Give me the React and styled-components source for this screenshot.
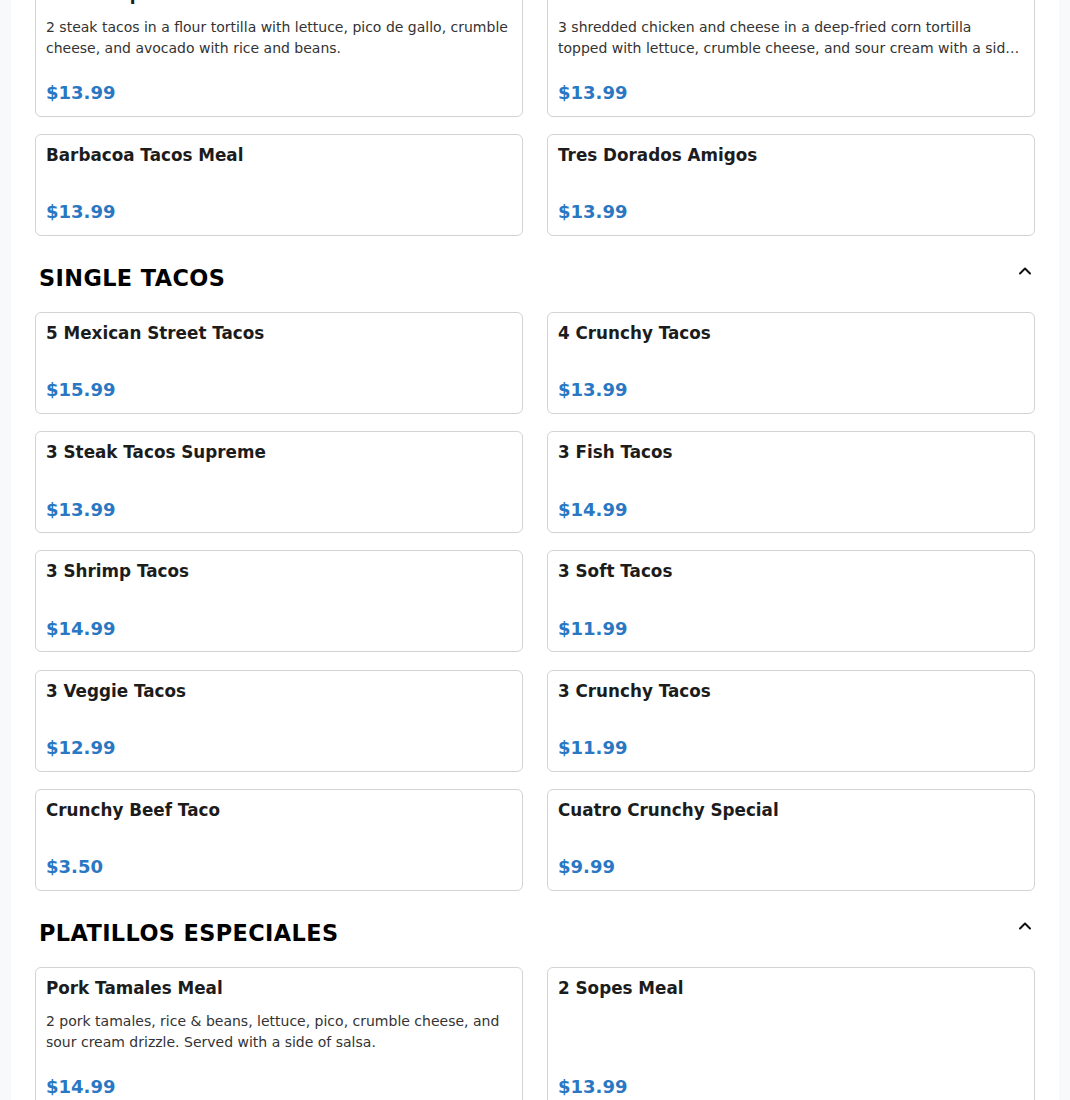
import React from 'react'
import styled, { createGlobalStyle } from 'styled-components'

const GlobalStyle = createGlobalStyle`
  html, body {
    margin: 0;
    padding: 0;
    background: #f8f9fa;
    font-family: "DejaVu Sans", Verdana, sans-serif;
  }
  * { box-sizing: border-box; }
`

const Page = styled.div`
  padding: 0 11px;
  min-height: 1100px;
  overflow: hidden;
`

const Panel = styled.main`
  background: #fff;
  padding: 0 24px 40px;
  min-height: 1100px;
`

const Section = styled.section`
  &:not(:first-child) {
    margin-top: 29px;
  }
`

// the menu is scrolled: the first section starts above the top edge
const ScrolledSection = styled(Section)`
  margin-top: -27px;
`

const HeaderRow = styled.div`
  display: flex;
  justify-content: space-between;
  align-items: flex-start;
  margin-bottom: 20px;
`

const SectionTitle = styled.h2`
  margin: 0;
  padding-left: 4px;
  font-size: 22.4px;
  line-height: 1.2;
  font-weight: 700;
  letter-spacing: 0.4px;
  text-transform: uppercase;
  color: #000;
`

const Toggle = styled.button`
  border: 0;
  background: none;
  padding: 0;
  margin-top: -4px;
  width: 20px;
  height: 20px;
  display: flex;
  align-items: center;
  justify-content: center;
  color: #111;
  cursor: pointer;
`

const Grid = styled.div`
  display: grid;
  grid-template-columns: 1fr 1fr;
  column-gap: 24px;
  row-gap: 17.25px;
`

const Card = styled.div`
  display: flex;
  flex-direction: column;
  min-height: 102px;
  padding: 10px 10px 9.5px;
  border: 1px solid #d3d3d3;
  border-radius: 6px;
  background: #fff;
`

const ItemName = styled.h3`
  margin: 0;
  font-size: 16.8px;
  line-height: 1.2;
  font-weight: 700;
  color: #1c1c1c;
`

const ItemDesc = styled.p`
  margin: 13px 0 20px;
  font-size: 14px;
  line-height: 21px;
  color: #333;
  display: -webkit-box;
  -webkit-line-clamp: 2;
  -webkit-box-orient: vertical;
  overflow: hidden;
`

const Price = styled.div`
  margin-top: auto;
  font-size: 18px;
  line-height: 1.5;
  font-weight: 700;
  color: #2a77c3;
`

const ChevronUp = () => (
  <svg width="20" height="20" viewBox="0 0 24 24" fill="none" stroke="currentColor" strokeWidth="2.4" strokeLinecap="round" strokeLinejoin="round">
    <path d="m18 15-6-6-6 6" />
  </svg>
)

const sections = [
  {
    title: null,
    items: [
      { name: 'Steak Supreme Meal', desc: '2 steak tacos in a flour tortilla with lettuce, pico de gallo, crumble cheese, and avocado with rice and beans.', price: '$13.99' },
      { name: 'Flautas Meal', desc: '3 shredded chicken and cheese in a deep-fried corn tortilla topped with lettuce, crumble cheese, and sour cream with a side of rice and beans.', price: '$13.99' },
      { name: 'Barbacoa Tacos Meal', price: '$13.99' },
      { name: 'Tres Dorados Amigos', price: '$13.99' },
    ],
  },
  {
    title: 'Single Tacos',
    items: [
      { name: '5 Mexican Street Tacos', price: '$15.99' },
      { name: '4 Crunchy Tacos', price: '$13.99' },
      { name: '3 Steak Tacos Supreme', price: '$13.99' },
      { name: '3 Fish Tacos', price: '$14.99' },
      { name: '3 Shrimp Tacos', price: '$14.99' },
      { name: '3 Soft Tacos', price: '$11.99' },
      { name: '3 Veggie Tacos', price: '$12.99' },
      { name: '3 Crunchy Tacos', price: '$11.99' },
      { name: 'Crunchy Beef Taco', price: '$3.50' },
      { name: 'Cuatro Crunchy Special', price: '$9.99' },
    ],
  },
  {
    title: 'Platillos Especiales',
    items: [
      { name: 'Pork Tamales Meal', desc: '2 pork tamales, rice & beans, lettuce, pico, crumble cheese, and sour cream drizzle. Served with a side of salsa.', price: '$14.99' },
      { name: '2 Sopes Meal', price: '$13.99' },
    ],
  },
]

const MenuCard = ({ item }) => (
  <Card>
    <ItemName>{item.name}</ItemName>
    {item.desc && <ItemDesc>{item.desc}</ItemDesc>}
    <Price>{item.price}</Price>
  </Card>
)

export default function App() {
  return (
    <>
      <GlobalStyle />
      <Page>
        <Panel>
          {sections.map((section, i) => {
            const Wrap = section.title ? Section : ScrolledSection
            return (
              <Wrap key={i}>
                {section.title && (
                  <HeaderRow>
                    <SectionTitle>{section.title}</SectionTitle>
                    <Toggle aria-label="Collapse">
                      <ChevronUp />
                    </Toggle>
                  </HeaderRow>
                )}
                <Grid>
                  {section.items.map((item) => (
                    <MenuCard key={item.name} item={item} />
                  ))}
                </Grid>
              </Wrap>
            )
          })}
        </Panel>
      </Page>
    </>
  )
}
